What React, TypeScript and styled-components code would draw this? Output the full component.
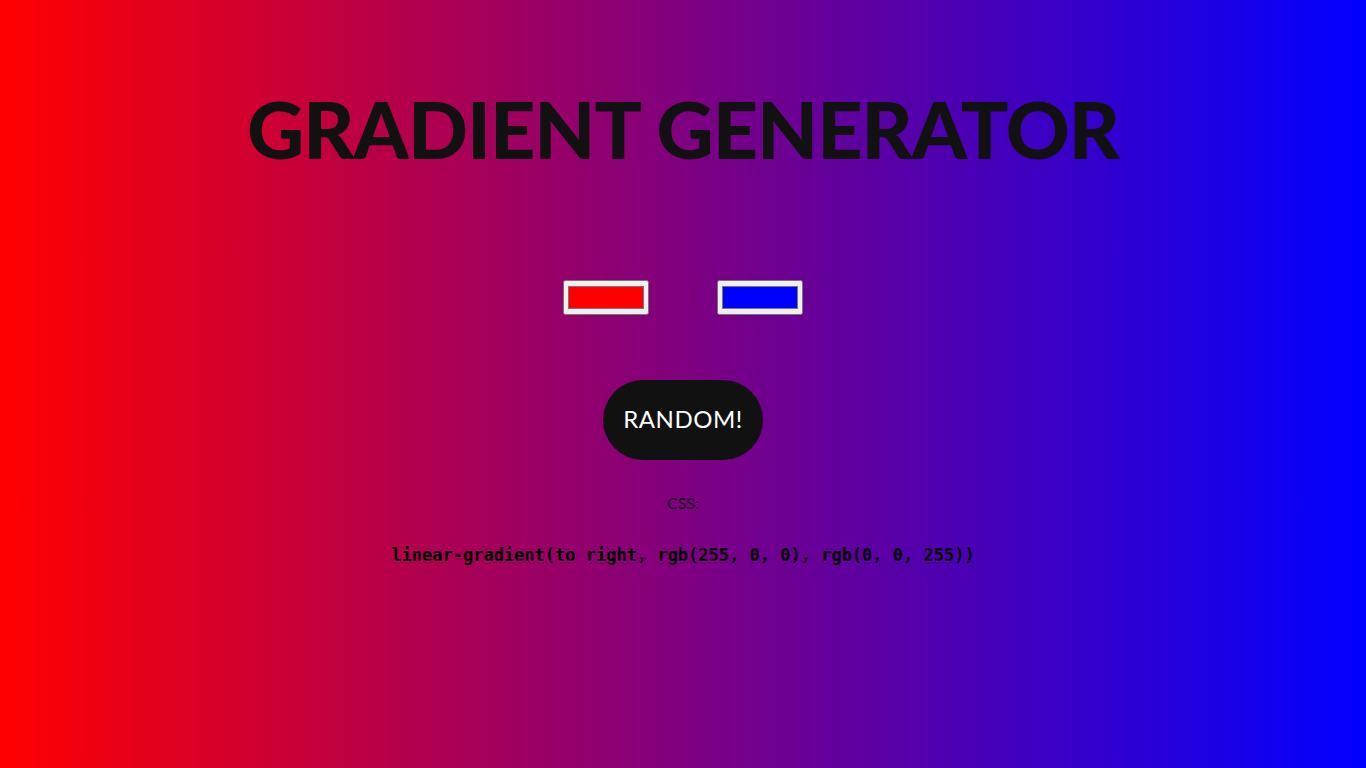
import React, { useState } from "react";
import styled, { createGlobalStyle } from "styled-components";

const Global = createGlobalStyle`
  html, body { margin: 0; padding: 0; }
  body {
    font-family: "Lato", "Open Sans", sans-serif;
    color: #111;
  }
`;

const Page = styled.div<{ $a: string; $b: string }>`
  width: 100vw;
  height: 100vh;
  overflow: hidden;
  background: linear-gradient(to right, ${(p) => p.$a}, ${(p) => p.$b});
  display: flex;
  flex-direction: column;
  align-items: center;
  text-align: center;
`;

const Title = styled.h1`
  margin: 84px 0 0;
  font-family: "Lato", sans-serif;
  font-weight: 900;
  font-size: 79px;
  line-height: 90px;
  letter-spacing: -1px;
  color: #111;
`;

const Pickers = styled.div`
  margin-top: 106px;
  display: flex;
  gap: 68px;
`;

const ColorInput = styled.input`
  width: 86px;
  height: 35px;
  margin: 0;
  box-sizing: border-box;
  cursor: pointer;
`;

const RandomButton = styled.button`
  margin-top: 65px;
  width: 160px;
  height: 80px;
  border: none;
  border-radius: 40px;
  background: #111;
  color: #fff;
  font-family: "Lato", sans-serif;
  font-size: 24px;
  line-height: 28px;
  padding: 0 0 3px;
  letter-spacing: 0.5px;
  cursor: pointer;
`;

const Label = styled.p`
  margin: 33px 0 0;
  font-family: "Lato", sans-serif;
  font-size: 16px;
  line-height: 20px;
`;

const Code = styled.code`
  margin-top: 32px;
  font-family: "DejaVu Sans Mono", monospace;
  font-weight: bold;
  font-size: 17px;
  line-height: 20px;
  color: #000;
`;

const toRgb = (hex: string) => {
  const n = parseInt(hex.slice(1), 16);
  return `rgb(${(n >> 16) & 255}, ${(n >> 8) & 255}, ${n & 255})`;
};

const randHex = () =>
  "#" +
  Math.floor(Math.random() * 0xffffff)
    .toString(16)
    .padStart(6, "0");

export default function App() {
  const [a, setA] = useState("#ff0000");
  const [b, setB] = useState("#0000ff");
  const css = `linear-gradient(to right, ${toRgb(a)}, ${toRgb(b)})`;
  return (
    <>
      <Global />
      <Page $a={a} $b={b}>
        <Title>GRADIENT GENERATOR</Title>
        <Pickers>
          <ColorInput type="color" value={a} onChange={(e) => setA(e.target.value)} />
          <ColorInput type="color" value={b} onChange={(e) => setB(e.target.value)} />
        </Pickers>
        <RandomButton
          onClick={() => {
            setA(randHex());
            setB(randHex());
          }}
        >
          RANDOM!
        </RandomButton>
        <Label>CSS:</Label>
        <Code>{css}</Code>
      </Page>
    </>
  );
}
